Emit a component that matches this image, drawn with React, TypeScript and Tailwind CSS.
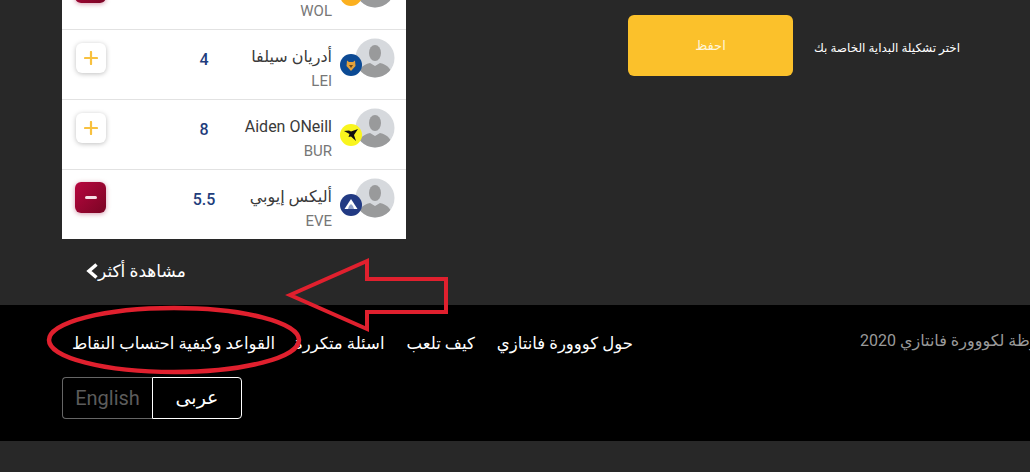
import React from 'react';

const FONT = "font-['Roboto','DejaVu_Sans',sans-serif]";

interface Player {
  name: string;
  team: string;
  price: string;
  added: boolean;
  badge: React.ReactNode;
}

// the first row is scrolled off the top, only its team code is visible
const players: Player[] = [
  {
    name: '',
    team: 'WOL',
    price: '',
    added: true,
    badge: <circle cx="11" cy="11" r="11" fill="#fbb01f" />,
  },
  {
    name: 'أدريان سيلفا',
    team: 'LEI',
    price: '4',
    added: false,
    badge: (
      <>
        <circle cx="11" cy="11" r="11" fill="#0c4a94" />
        <path d="M7 6.500l2 1.500h4l2-1.500.5 5.500L11 17l-4.500-5z" fill="#e3a23c" />
        <path d="M9 11h4l-2 3z" fill="#6b4a1d" />
      </>
    ),
  },
  {
    name: 'Aiden ONeill',
    team: 'BUR',
    price: '8',
    added: false,
    badge: (
      <>
        <circle cx="11" cy="11" r="11" fill="#f9f51e" />
        <path d="M4 7l5-.5 2 1 7-2.500-4 6 2 6-5-4.500-2.500.5 1-3z" fill="#111" />
      </>
    ),
  },
  {
    name: 'أليكس إيوبي',
    team: 'EVE',
    price: '5.5',
    added: true,
    badge: (
      <>
        <circle cx="11" cy="11" r="11" fill="#223a83" />
        <path d="M11 5l6.500 10h-13z" fill="#fff" />
        <path d="M9 12l2-2 2 2 1 3H8z" fill="#8fa0c8" />
      </>
    ),
  },
];

const links = ['حول كووورة فانتازي', 'كيف تلعب', 'اسئلة متكررة', 'القواعد وكيفية احتساب النقاط'];

const Avatar = ({ badge }: { badge: React.ReactNode }) => (
  <div className="relative w-[55px] h-[40px] shrink-0">
    <svg viewBox="0 0 40 40" className="absolute right-0 top-0 w-[40px] h-[40px]">
      <defs>
        <clipPath id="avatar-clip">
          <circle cx="20" cy="20" r="19.500" />
        </clipPath>
      </defs>
      <circle cx="20" cy="20" r="19.500" fill="#d6d9dd" />
      <g clipPath="url(#avatar-clip)" fill="#999a9b">
        <ellipse cx="20" cy="15" rx="6" ry="8" />
        <path d="M3 40c0-9 4-13 12-15l5 3 5-3c8 2 12 6 12 15z" />
      </g>
    </svg>
    <svg viewBox="0 0 22 22" className="absolute left-0 top-[16px] w-[22px] h-[22px]">
      {badge}
    </svg>
  </div>
);

const ToggleButton = ({ added }: { added: boolean }) =>
  added ? (
    <button className="w-[31px] h-[31px] -ml-px rounded-md flex items-center justify-center bg-gradient-to-br from-[#b8063f] to-[#7a0524] shadow-[0_1px_5px_rgba(150,0,50,0.4)]">
      <span className="w-[12px] h-[3px] rounded-sm bg-[#f6dfe5]" />
    </button>
  ) : (
    <button className="w-[30px] h-[30px] mt-px rounded-md bg-white flex items-center justify-center shadow-[0_1px_5px_rgba(0,0,0,0.25)]">
      <svg viewBox="0 0 14 14" className="w-[14px] h-[14px]">
        <path d="M7 1v12M1 7h12" stroke="#f8c13f" strokeWidth="2.200" strokeLinecap="round" />
      </svg>
    </button>
  );

const PlayerRow = ({ player }: { player: Player }) => (
  <div className="h-[70px] last:h-[69px] flex items-start pt-[12px] pl-[14px] pr-[11px] border-b border-[#e2e2e2] last:border-b-0">
    <ToggleButton added={player.added} />
    <span className="w-[60px] ml-[68px] pt-[8px] text-center text-[16px] leading-[20px] font-medium text-[#1f3d7c] font-['Roboto',sans-serif]">
      {player.price}
    </span>
    <div className="flex-1 -mt-[1px] text-right">
      <div dir="auto" className="h-[32px] -mb-[2px] text-[16px] leading-[32px] text-[#3a3a3a] whitespace-nowrap">
        {player.name}
      </div>
      <div className="text-[15px] leading-[20px] text-[#777] font-['Roboto',sans-serif]">{player.team}</div>
    </div>
    <div className="ml-[8px] -mt-[4px]">
      <Avatar badge={player.badge} />
    </div>
  </div>
);

const Annotations = () => (
  <svg viewBox="0 0 1030 472" className="absolute inset-0 w-[1030px] h-[472px] pointer-events-none">
    <path
      d="M290 295L367 261V279H446V312H367V329Z"
      fill="none"
      stroke="#e0202e"
      strokeWidth="4"
      strokeLinejoin="miter"
    />
    <ellipse cx="174" cy="340" rx="125" ry="32" fill="none" stroke="#e0202e" strokeWidth="4.500" />
  </svg>
);

export default function App() {
  return (
    <div className={`relative w-[1030px] h-[472px] overflow-hidden bg-[#282828] ${FONT}`}>
      <div className="h-[305px] flex overflow-hidden">
        <div className="w-[344px] ml-[62px] shrink-0">
          <div className="bg-white -mt-[40px]">
            {players.map((player) => (
              <PlayerRow key={player.team} player={player} />
            ))}
          </div>
          <div className="mt-[21px] ml-[24px] flex items-center text-white text-[17px] leading-[22px]">
            <svg viewBox="0 0 12 16" className="w-[12px] h-[16px]">
              <path d="M10.500 1.500L3 8l7.500 6.500" fill="none" stroke="#fff" strokeWidth="3.500" />
            </svg>
            <span dir="rtl">مشاهدة أكثر</span>
          </div>
        </div>
        <div className="flex items-start pt-[15px] ml-[222px]">
          <button className="w-[165px] h-[61px] rounded-md bg-[#fbc12b] text-[#fff6dc] text-[13px]">احفظ</button>
          <span dir="rtl" className="ml-[21px] mt-[25px] text-white text-[12px] leading-[16px] whitespace-nowrap">
            اختر تشكيلة البداية الخاصة بك
          </span>
        </div>
      </div>

      <footer className="h-[136px] bg-black pt-[28px] flex flex-col">
        <div className="flex">
          <div className="w-[860px] shrink-0 pl-[62px]">
            <nav dir="rtl" className="w-[571px] flex gap-[22px] text-white text-[16.500px] font-medium leading-[22px] whitespace-nowrap">
              {links.map((label) => (
                <a key={label} href="#" className="last:-mr-[3px]">
                  {label}
                </a>
              ))}
            </nav>
          </div>
          <span dir="rtl" className="-mt-[3px] text-[#9a9a9a] text-[16px] leading-[22px] whitespace-nowrap">
            جميع الحقوق محفوظة لكووورة فانتازي 2020
          </span>
        </div>
        <div className="flex ml-[62px] mt-[22px] w-[180px] h-[42px]">
          <button className="w-[90px] rounded-l-[4px] border border-r-0 border-[#666] text-[#5c5c5c] text-[20px]">
            English
          </button>
          <button className="w-[90px] rounded-r-[4px] border border-white text-white text-[19px] font-medium">
            عربى
          </button>
        </div>
      </footer>

      <Annotations />
    </div>
  );
}
